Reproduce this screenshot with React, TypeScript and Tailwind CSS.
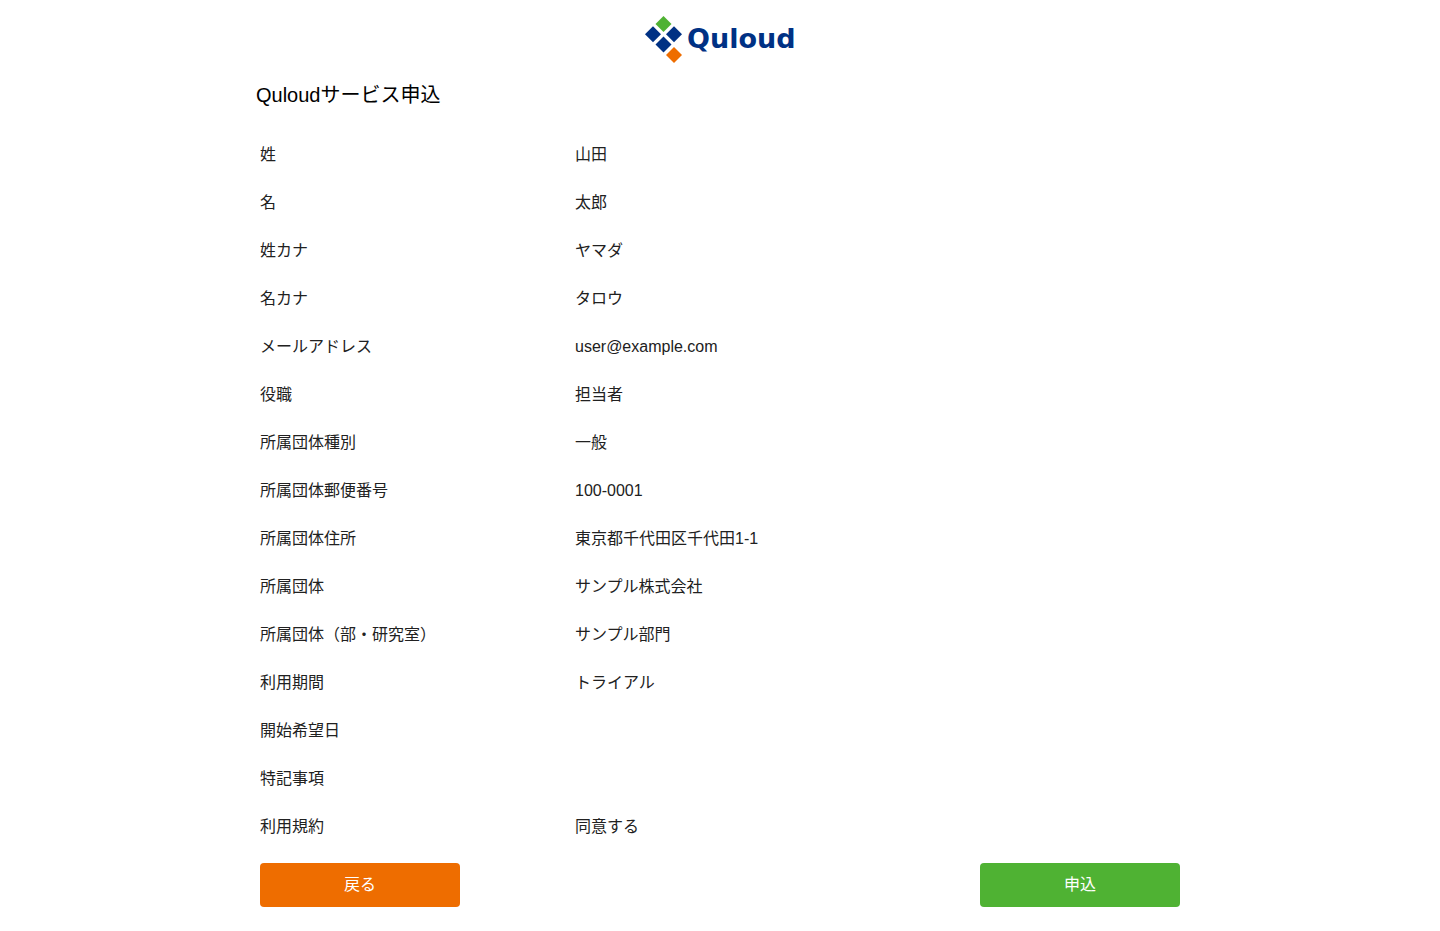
import React from 'react';

const Logo: React.FC = () => (
  <svg
    className="h-[47px] w-[152px]"
    viewBox="0 0 152 47"
    role="img"
    aria-label="Quloud"
  >
    <path d="M19.5 0 L27.5 8 L19.5 16 L11.5 8 Z" fill="#4fb233" />
    <path d="M9 10.3 L17 18.3 L9 26.3 L1 18.3 Z" fill="#003184" />
    <path d="M30 10.3 L38 18.3 L30 26.3 L22 18.3 Z" fill="#003184" />
    <path d="M19.5 20.6 L27.5 28.6 L19.5 36.6 L11.5 28.6 Z" fill="#003184" />
    <path d="M30 31 L38 39 L30 47 L22 39 Z" fill="#ee6d00" />
    <text x="43" y="32" fill="#003184" fontSize="27" fontWeight="700" fontFamily="'DejaVu Sans', sans-serif">
      Quloud
    </text>
  </svg>
);

const App: React.FC = () => {
  const items = [
    { label: '姓', value: '山田' },
    { label: '名', value: '太郎' },
    { label: '姓カナ', value: 'ヤマダ' },
    { label: '名カナ', value: 'タロウ' },
    { label: 'メールアドレス', value: 'user@example.com' },
    { label: '役職', value: '担当者' },
    { label: '所属団体種別', value: '一般' },
    { label: '所属団体郵便番号', value: '100-0001' },
    { label: '所属団体住所', value: '東京都千代田区千代田1-1' },
    { label: '所属団体', value: 'サンプル株式会社' },
    { label: '所属団体（部・研究室）', value: 'サンプル部門' },
    { label: '利用期間', value: 'トライアル' },
    { label: '開始希望日', value: '' },
    { label: '特記事項', value: '' },
    { label: '利用規約', value: '同意する' },
  ];

  return (
    <div
      lang="ja"
      className="bg-white px-4 pt-4 pb-6 text-base text-[#212121] font-['Liberation_Sans','Noto_Sans_CJK_JP',sans-serif]"
    >
      <header className="flex justify-center">
        <Logo />
      </header>
      <main className="mx-auto mt-4 max-w-[928px]">
        <h1 className="text-xl leading-8 text-black">Quloudサービス申込</h1>
        <dl className="mt-5 px-1">
          {items.map(item => (
            <div key={item.label} className="grid min-h-12 grid-cols-[minmax(0,315px)_1fr] items-center">
              <dt>{item.label}</dt>
              <dd>{item.value}</dd>
            </div>
          ))}
        </dl>
        <div className="mt-3 flex justify-between gap-4 px-1">
          <button type="button" className="h-11 w-[200px] cursor-pointer rounded bg-[#ee6d00] text-white">
            戻る
          </button>
          <button type="submit" className="h-11 w-[200px] cursor-pointer rounded bg-[#4fb233] text-white">
            申込
          </button>
        </div>
      </main>
    </div>
  );
};

export default App;
